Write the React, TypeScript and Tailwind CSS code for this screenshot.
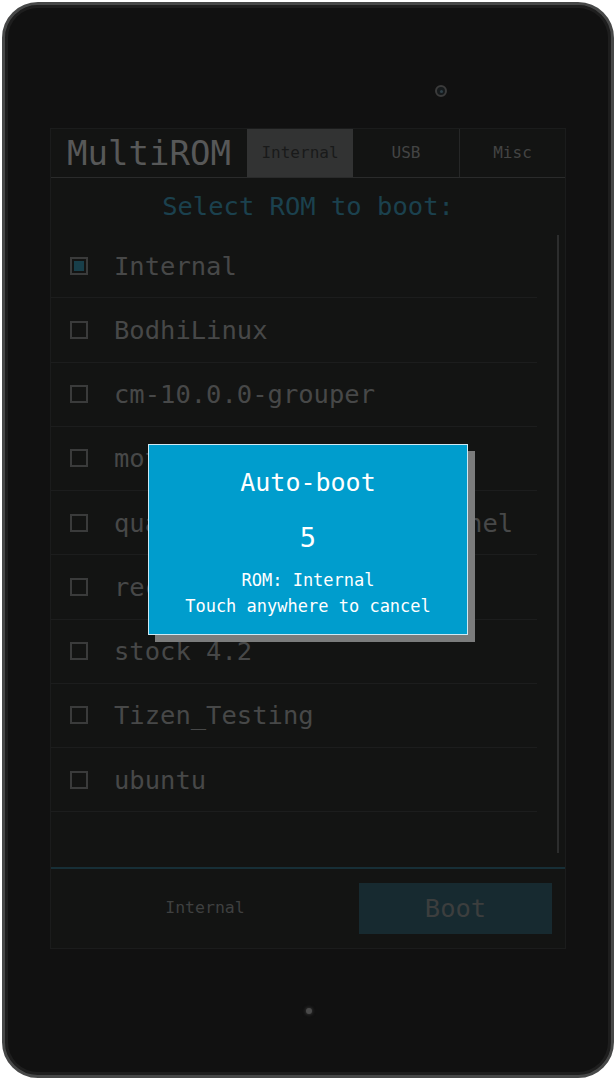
const roms = [
  'Internal',
  'BodhiLinux',
  'cm-10.0.0-grouper',
  'moto_ubuntu_raring',
  'quantal-touch-kexec-kernel',
  'recovery_ubuntu',
  'stock 4.2',
  'Tizen_Testing',
  'ubuntu',
]

function Checkbox({ checked }: { checked?: boolean }) {
  return (
    <span className="w-[18px] h-[18px] shrink-0 border-2 border-[#3a3b3b] p-[2px] flex">
      {checked && <span className="flex-1 bg-[#183f4a]" />}
    </span>
  )
}

function Screen() {
  return (
    <div className="relative ml-[45px] w-[516px] h-[821px] shrink-0 flex flex-col border border-[#1b1c1c] bg-[#131413]">
      {/* Header with tabs */}
      <div className="h-[49px] shrink-0 flex border-b border-[#2a2b2b]">
        <div className="w-[196px] flex items-center justify-center text-[34px] text-[#575858]">
          MultiROM
        </div>
        <div className="w-[106px] flex items-center justify-center bg-[#323333] text-[16px] text-[#191a1a]">
          Internal
        </div>
        <div className="w-[106px] flex items-center justify-center text-[16px] text-[#434444]">
          USB
        </div>
        <div className="flex-1 flex items-center justify-center border-l border-[#262727] text-[16px] text-[#434444]">
          Misc
        </div>
      </div>

      <div className="h-[56px] shrink-0 flex items-center justify-center text-[25.5px] text-[#1b414e]">
        Select ROM to boot:
      </div>

      {/* ROM list + scrollbar */}
      <div className="flex-1 flex min-h-0">
        <div className="w-[486px] flex flex-col overflow-hidden">
          {roms.map((rom, i) => (
            <div
              key={rom}
              className="h-[64.25px] shrink-0 flex items-center pl-[19px] border-b border-[#1c1d1d]"
            >
              <Checkbox checked={i === 0} />
              <span className="ml-[26px] text-[25.5px] text-[#474848] whitespace-nowrap">{rom}</span>
            </div>
          ))}
        </div>
        <div className="flex-1 pl-[20px] pt-[1px] pb-[14px]">
          <div className="w-[2px] h-full bg-[#2c2d2d]" />
        </div>
      </div>

      {/* Bottom bar */}
      <div className="h-[81px] shrink-0 flex items-center border-t-2 border-[#172f37]">
        <div className="flex-1 flex justify-center text-[16.5px] text-[#3f4040]">Internal</div>
        <div className="w-[193px] h-[51px] mr-[13px] flex items-center justify-center bg-[#172a30] text-[25.5px] text-[#3c3e3e]">
          Boot
        </div>
      </div>

      {/* Auto-boot dialog overlay */}
      <div className="absolute left-[97px] top-[315px] w-[320px] h-[191px] flex flex-col items-center border border-[#cfe9f3] bg-[#009dcd] shadow-[7px_7px_0_#7b7c7c] text-white">
        <div className="mt-[23px] text-[25px] leading-[30px]">Auto-boot</div>
        <div className="mt-[25px] text-[27px] leading-[30px]">5</div>
        <div className="mt-[16px] text-[17px] leading-[22px]">ROM: Internal</div>
        <div className="mt-[4px] text-[17px] leading-[22px]">Touch anywhere to cancel</div>
      </div>
    </div>
  )
}

export default function App() {
  return (
    <div className="w-[616px] h-[1080px] bg-white p-[2px] font-['DejaVu_Sans_Mono',monospace]">
      <div className="h-full rounded-[36px] border-[3px] border-[#474848] bg-[#111111] shadow-[inset_0_0_0_3px_#1e1e1e] flex flex-col overflow-hidden">
        {/* Top bezel with front camera */}
        <div className="h-[123px] shrink-0 pt-[80px] pl-[430px]">
          <div className="w-[12px] h-[12px] rounded-full border-2 border-[#3b3b3b] bg-[#161a1c] flex items-center justify-center">
            <span className="w-[3px] h-[3px] rounded-full bg-[#2f4048]" />
          </div>
        </div>

        <Screen />

        {/* Bottom bezel with notification light */}
        <div className="flex-1 flex justify-center pt-[59px] pl-[2px]">
          <span className="w-[6px] h-[6px] rounded-full bg-[#4a4a4a] shadow-[0_0_3px_1px_#2d2d2d]" />
        </div>
      </div>
    </div>
  )
}
